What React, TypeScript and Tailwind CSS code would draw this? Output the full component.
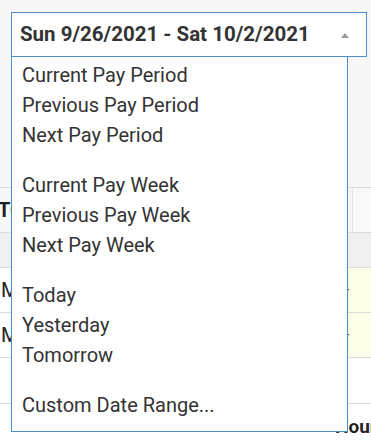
import { Fragment } from "react";

const groups = [
  ["Current Pay Period", "Previous Pay Period", "Next Pay Period"],
  ["Current Pay Week", "Previous Pay Week", "Next Pay Week"],
  ["Today", "Yesterday", "Tomorrow"],
  ["Custom Date Range..."],
];

function BackgroundTable() {
  return (
    <div className="text-[20px] text-[#222]">
      {/* header row */}
      <div className="flex h-[45px] border-t border-[#dcdcdc] bg-[#f7f7f7]">
        <div className="-ml-[2px] flex w-[354px] items-center font-bold">TOTAL</div>
        <div className="flex-1 border-l border-[#e4e4e4] bg-[#f9f9f9]" />
      </div>
      {/* sub header */}
      <div className="h-[35px] border-t border-[#dcdcdc] bg-[#f0f0f0]" />
      {["Mon", "Mon"].map((d, i) => (
        <div key={i} className="flex h-[45px] border-t border-[#dcdcdc] bg-[#fdfde8]">
          <div className="flex w-[150px] items-center bg-white pl-[1px]">{d}</div>
          <div className="flex flex-1 items-center justify-end pr-[21px] text-[12px] leading-none">·</div>
        </div>
      ))}
      <div className="h-[46px] border-t border-[#dcdcdc] bg-white" />
      <div className="h-[40px] border-t border-[#dcdcdc] bg-white pl-[335px] pt-[11px] text-[19px] font-bold leading-[24px]">
        Hours
      </div>
    </div>
  );
}

export default function App() {
  return (
    <div className="relative h-[442px] w-[371px] overflow-hidden bg-white font-['Roboto',sans-serif]">
      <div className="h-[187px] bg-[#f7f7f7] pl-[11px] pt-[12px]">
        <div className="relative w-[356px]">
          <div className="flex h-[45px] items-center justify-between border border-[#4b8ecb] bg-white pl-[8px] pr-[17px]">
            <span className="text-[20.5px] font-bold text-[#333]">Sun 9/26/2021 - Sat 10/2/2021</span>
            <svg width="8" height="5" viewBox="0 0 8 5" className="mt-[1px]">
              <path d="M0 5 L4 0 L8 5 Z" fill="#9a9a9a" />
            </svg>
          </div>
          <div className="absolute left-0 top-full z-10 w-[337px] border-x border-b border-[#4b8ecb] bg-white pb-[11px] pt-[3px]">
            {groups.map((g, gi) => (
              <Fragment key={gi}>
                {gi > 0 && <div className="h-[20px]" />}
                {g.map((label) => (
                  <div key={label} className="flex h-[30px] items-center pl-[10px] text-[20px] text-[#333]">
                    {label}
                  </div>
                ))}
              </Fragment>
            ))}
          </div>
        </div>
      </div>
      <BackgroundTable />
    </div>
  );
}
